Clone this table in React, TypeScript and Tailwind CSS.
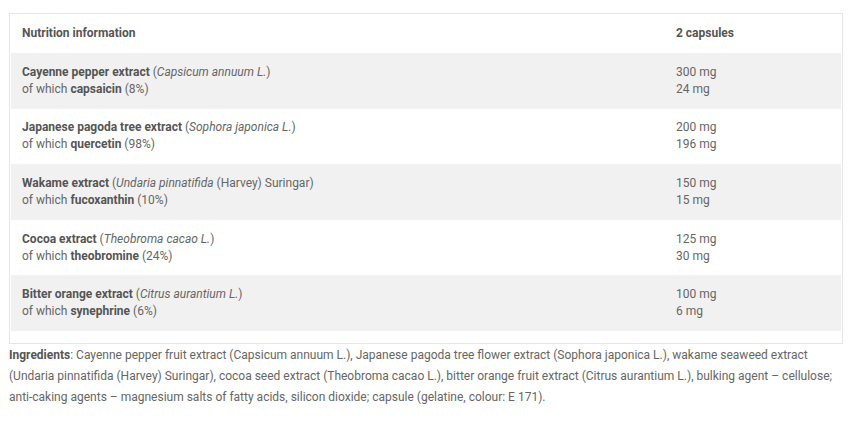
const rows = [
    {name: 'Cayenne pepper extract', latin: 'Capsicum annuum L.', extra: '', sub: 'capsaicin', pct: '8%', a: '300 mg', b: '24 mg'},
    {name: 'Japanese pagoda tree extract', latin: 'Sophora japonica L.', extra: '', sub: 'quercetin', pct: '98%', a: '200 mg', b: '196 mg'},
    {name: 'Wakame extract', latin: 'Undaria pinnatifida', extra: ' (Harvey) Suringar', sub: 'fucoxanthin', pct: '10%', a: '150 mg', b: '15 mg'},
    {name: 'Cocoa extract', latin: 'Theobroma cacao L.', extra: '', sub: 'theobromine', pct: '24%', a: '125 mg', b: '30 mg'},
    {name: 'Bitter orange extract', latin: 'Citrus aurantium L.', extra: '', sub: 'synephrine', pct: '6%', a: '100 mg', b: '6 mg'},
];

const App = () => {
    return (
        <div className="bg-white w-[866px] h-[437px] pt-[13px] pl-[9px] text-[12px] text-[#666] font-['Roboto',sans-serif]">
            <div className="w-[834px] border border-[#e6e6e6] px-px pb-[12px]">
                <table className="w-full table-fixed border-collapse leading-[17px]">
                    <thead>
                    <tr className="font-bold text-[#555]">
                        <th className="text-left font-bold pl-[11px] py-[11px] w-[665px]">Nutrition information</th>
                        <th className="text-left font-bold py-[11px]">2 capsules</th>
                    </tr>
                    </thead>
                    <tbody>
                    {rows.map((r, i) => (
                        <tr key={i} className={i % 2 === 0 ? 'bg-[#f1f1f1]' : 'bg-white'}>
                            <td className="pl-[11px] py-[10.8px] align-top">
                                <div><b className="text-[#555]">{r.name}</b> (<i>{r.latin}</i>{r.extra})</div>
                                <div>of which <b className="text-[#555]">{r.sub}</b> ({r.pct})</div>
                            </td>
                            <td className="py-[10.8px] align-top">
                                <div>{r.a}</div>
                                <div>{r.b}</div>
                            </td>
                        </tr>
                    ))}
                    </tbody>
                </table>
            </div>
            <p className="w-[840px] leading-[21px] mt-[1px]">
                <b className="text-[#555]">Ingredients</b>: Cayenne pepper fruit extract (Capsicum annuum L.), Japanese pagoda tree flower extract (Sophora japonica L.), wakame seaweed extract (Undaria pinnatifida (Harvey) Suringar), cocoa seed extract (Theobroma cacao L.), bitter orange fruit extract (Citrus aurantium L.), bulking agent – cellulose; anti-caking agents – magnesium salts of fatty acids, silicon dioxide; capsule (gelatine, colour: E 171).
            </p>
        </div>
    );
}

export default App
